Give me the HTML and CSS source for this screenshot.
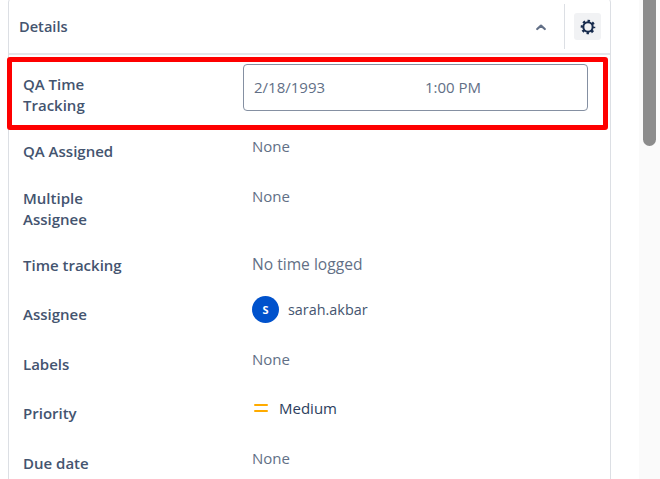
FILE: index.html
```html
<!DOCTYPE html>
<html lang="en">
<head>
<meta charset="utf-8">
<title>Details</title>
<link rel="stylesheet" href="styles.css">
</head>
<body>
<div class="page">
  <section class="panel">
    <header class="head">
      <h2 class="title">Details</h2>
      <svg class="chevron" width="12" height="8" viewBox="0 0 12 8"><path d="M2.200 6 L6 2.600 L9.800 6" fill="none" stroke="#626f86" stroke-width="2.200" stroke-linecap="round" stroke-linejoin="round"/></svg>
      <span class="divider"></span>
      <button class="gear" type="button" aria-label="Settings">
        <svg width="16" height="16" viewBox="0 0 16 16"><circle cx="8" cy="8" r="4.700" fill="none" stroke="#172b4d" stroke-width="2.100"/><circle cx="8" cy="8" r="6.200" fill="none" stroke="#172b4d" stroke-width="2.200" stroke-dasharray="2.400 2.470" stroke-dashoffset="1.200"/></svg>
      </button>
    </header>
    <div class="field-highlight">
      <div class="highlight-label">QA Time<br>Tracking</div>
      <div class="date-input"><span class="date">2/18/1993</span><span>1:00 PM</span></div>
    </div>
    <div class="row row-qa">
      <div class="label">QA Assigned</div><div class="value">None</div>
    </div>
    <div class="row row-multi">
      <div class="label">Multiple<br>Assignee</div><div class="value">None</div>
    </div>
    <div class="row row-time">
      <div class="label">Time tracking</div><div class="value value-time">No time logged</div>
    </div>
    <div class="row row-assignee">
      <div class="label">Assignee</div>
      <div class="value user"><span class="avatar">S</span><span>sarah.akbar</span></div>
    </div>
    <div class="row row-labels">
      <div class="label">Labels</div><div class="value">None</div>
    </div>
    <div class="row row-priority">
      <div class="label">Priority</div>
      <div class="value priority">
        <svg width="14" height="10" viewBox="0 0 14 10"><rect x="0" y="0" width="14" height="2" rx="1" fill="#ffab00"/><rect x="0" y="6" width="14" height="2" rx="1" fill="#ffab00"/></svg>
        <span>Medium</span>
      </div>
    </div>
    <div class="row row-due">
      <div class="label">Due date</div><div class="value">None</div>
    </div>
  </section>
  <aside class="track"><div class="thumb"></div></aside>
</div>
</body>
</html>
```
FILE: styles.css
```css
* { box-sizing: border-box; }
html, body { margin: 0; height: 479px; overflow: hidden; background: #fff; }
body { font-family: "Open Sans", "Noto Sans", sans-serif; font-size: 15px; line-height: 21px; color: #44546f; }
.page { display: flex; height: 479px; padding-left: 8px; overflow: hidden; }
.panel { width: 603px; height: 490px; margin-top: -2px; border: 1px solid #dcdfe4; border-radius: 4px; flex: none; }
.head { display: flex; align-items: center; height: 56px; padding: 1px 9px 0 10px; border-bottom: 2px solid #e4e6ea; }
.title { margin: 0; flex: 1; font-size: 14.6px; font-weight: 600; color: #44546f; }
.chevron { flex: none; margin-right: 17px; }
.divider { width: 1px; height: 45px; background: #dcdfe4; margin-right: 9px; }
.gear { width: 27px; height: 27px; padding: 0; border: 0; border-radius: 3px; background: #f1f2f4; display: flex; align-items: center; justify-content: center; }
.field-highlight { display: flex; width: 601px; height: 73px; margin: 2px 0 6px -2px; padding: 2px 15px 0 11px; border: 5px solid #fe0000; border-radius: 3px; }
.highlight-label { width: 220px; padding-top: 10px; font-weight: 600; }
.date-input { width: 345px; height: 47px; display: flex; align-items: center; padding-left: 10px; border: 1px solid #8590a2; border-radius: 4px; color: #626f86; }
.date { width: 171px; }
.row { display: flex; padding-left: 14px; }
.label { width: 229px; flex: none; font-weight: 600; }
.value { color: #626f86; }
.value-time { font-size: 15.6px; }
.row-qa { height: 50px; }
.row-qa .label { padding-top: 5px; }
.row-multi { height: 68px; }
.row-multi .label { padding-top: 2px; }
.row-time { height: 42px; }
.row-time .label { padding-top: 1px; }
.row-assignee { height: 53px; }
.row-assignee .label { padding-top: 8px; }
.row-labels { height: 49px; }
.row-labels .label { padding-top: 5px; }
.row-priority { height: 50px; }
.row-priority .label { padding-top: 5px; }
.row-due .label { padding-top: 5px; }
.user { display: flex; align-items: center; gap: 9px; height: 27px; font-size: 14.4px; color: #44546f; }
.avatar { width: 27px; height: 27px; border-radius: 50%; background: #0052cc; color: #fff; font-size: 11px; font-weight: 700; display: flex; align-items: center; justify-content: center; }
.priority { display: flex; align-items: center; gap: 11px; height: 21px; color: #2c3e5d; }
.priority svg { margin: 0 0 0 2px; }
.track { width: 21px; height: 479px; margin-left: 28px; padding-left: 4px; background: #fafafa; flex: none; }
.thumb { width: 13px; height: 146px; background: #8c8c8c; border-radius: 0 0 7px 7px; }
```
